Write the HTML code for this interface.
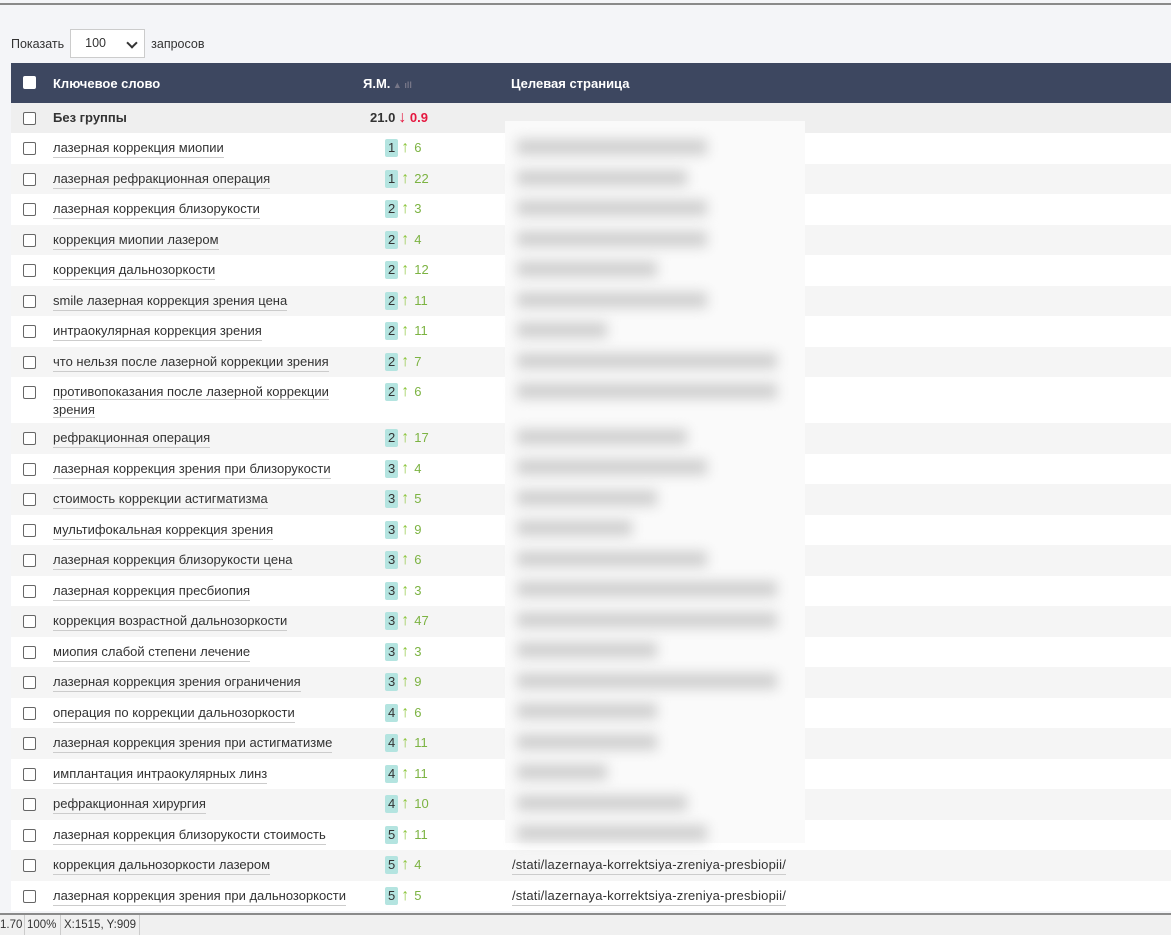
<!DOCTYPE html>
<html><head><meta charset="utf-8"><style>
*{box-sizing:border-box;margin:0;padding:0}
body{width:1171px;height:935px;overflow:hidden;background:#f4f5f8;font-family:"Liberation Sans","DejaVu Sans",sans-serif;font-size:13px;color:#333;position:relative}
.top{position:absolute;left:0;top:3px;width:1171px;height:2px;background:#8a8a8a}
.show{position:absolute;left:11px;top:29px;height:29px;display:flex;align-items:center;gap:4px;color:#333;font-size:12.5px}
.sel{width:75px;height:29px;border:1px solid #ccc;background:#fff;position:relative;padding-left:14px;line-height:27px;margin:0 2px}
.sel:after{content:"";position:absolute;right:8px;top:9px;width:6px;height:6px;border-right:2px solid #333;border-bottom:2px solid #333;transform:rotate(45deg)}
.tbl{position:absolute;left:11px;top:63px;width:1160px}
.hd{height:40px;background:#3d4760;color:#fff;font-weight:bold;position:relative}
.hd span{position:absolute;top:13px}
.cb{position:absolute;left:12px;width:13px;height:13px;border:1px solid #666;border-radius:2px;background:#fff}
.row{position:relative;height:30.5px;background:#fff}
.row.g{background:#f5f5f5}
.row .cb{top:9px}
.kw{position:absolute;left:42px;top:6px;line-height:18px;border-bottom:1px solid #ccc;max-width:300px}
.pos{position:absolute;left:374px;top:6px;display:flex;align-items:center;gap:3px;line-height:18px}
.b{background:#b4e4e0;border-radius:2px;padding:0 3px;color:#333}
.ar{color:#8dc63f;font-weight:bold;font-size:16px}
.n{color:#7cb342;margin-left:2px}
.url{position:absolute;left:501px;top:6px;border-bottom:1px solid #ccc;line-height:18px;letter-spacing:.2px}
.blur{position:absolute;left:505px;top:121px;width:300px;height:722px;background:#fafafa}
.bar{position:absolute;left:12px;height:16px;background:#d0d0d0;filter:blur(6px)}
.status{position:absolute;left:0;top:913px;width:1171px;height:22px;background:#f0f0f0;border-top:2px solid #8a8a8a;font-size:11.5px;color:#333;white-space:nowrap;overflow:hidden}
.status span{position:absolute;top:0;height:20px;line-height:20px;border-right:1px solid #ccc;padding-right:4px;white-space:nowrap}
</style></head><body>
<div class="top"></div>
<div class="show">Показать <div class="sel">100</div> запросов</div>
<div class="tbl">
<div class="hd"><div class="cb" style="top:13px;border-color:#fff"></div><span style="left:42px">Ключевое слово</span><span style="left:352px">Я.М.<span style="position:static;color:#778;font-size:9px"> ▲ ıll</span></span><span style="left:500px">Целевая страница</span></div>
<div class="row" style="height:30px;background:#efefef"><div class="cb"></div><div class="kw" style="border:0;font-weight:bold">Без группы</div><div class="pos" style="left:359px;font-weight:bold"><span>21.0</span><span style="color:#e5173f"><span style="font-size:16px">↓</span> 0.9</span></div></div>
<div class="row"><div class="cb"></div><div class="kw">лазерная коррекция миопии</div><div class="pos"><span class="b">1</span><span class="ar">↑</span><span class="n">6</span></div></div>
<div class="row g"><div class="cb"></div><div class="kw">лазерная рефракционная операция</div><div class="pos"><span class="b">1</span><span class="ar">↑</span><span class="n">22</span></div></div>
<div class="row"><div class="cb"></div><div class="kw">лазерная коррекция близорукости</div><div class="pos"><span class="b">2</span><span class="ar">↑</span><span class="n">3</span></div></div>
<div class="row g"><div class="cb"></div><div class="kw">коррекция миопии лазером</div><div class="pos"><span class="b">2</span><span class="ar">↑</span><span class="n">4</span></div></div>
<div class="row"><div class="cb"></div><div class="kw">коррекция дальнозоркости</div><div class="pos"><span class="b">2</span><span class="ar">↑</span><span class="n">12</span></div></div>
<div class="row g"><div class="cb"></div><div class="kw">smile лазерная коррекция зрения цена</div><div class="pos"><span class="b">2</span><span class="ar">↑</span><span class="n">11</span></div></div>
<div class="row"><div class="cb"></div><div class="kw">интраокулярная коррекция зрения</div><div class="pos"><span class="b">2</span><span class="ar">↑</span><span class="n">11</span></div></div>
<div class="row g"><div class="cb"></div><div class="kw">что нельзя после лазерной коррекции зрения</div><div class="pos"><span class="b">2</span><span class="ar">↑</span><span class="n">7</span></div></div>
<div class="row" style="height:46px"><div class="cb"></div><div class="kw" style="border:0"><span style="border-bottom:1px solid #ccc">противопоказания после лазерной коррекции</span><br><span style="border-bottom:1px solid #ccc">зрения</span></div><div class="pos"><span class="b">2</span><span class="ar">↑</span><span class="n">6</span></div></div>
<div class="row g"><div class="cb"></div><div class="kw">рефракционная операция</div><div class="pos"><span class="b">2</span><span class="ar">↑</span><span class="n">17</span></div></div>
<div class="row"><div class="cb"></div><div class="kw">лазерная коррекция зрения при близорукости</div><div class="pos"><span class="b">3</span><span class="ar">↑</span><span class="n">4</span></div></div>
<div class="row g"><div class="cb"></div><div class="kw">стоимость коррекции астигматизма</div><div class="pos"><span class="b">3</span><span class="ar">↑</span><span class="n">5</span></div></div>
<div class="row"><div class="cb"></div><div class="kw">мультифокальная коррекция зрения</div><div class="pos"><span class="b">3</span><span class="ar">↑</span><span class="n">9</span></div></div>
<div class="row g"><div class="cb"></div><div class="kw">лазерная коррекция близорукости цена</div><div class="pos"><span class="b">3</span><span class="ar">↑</span><span class="n">6</span></div></div>
<div class="row"><div class="cb"></div><div class="kw">лазерная коррекция пресбиопия</div><div class="pos"><span class="b">3</span><span class="ar">↑</span><span class="n">3</span></div></div>
<div class="row g"><div class="cb"></div><div class="kw">коррекция возрастной дальнозоркости</div><div class="pos"><span class="b">3</span><span class="ar">↑</span><span class="n">47</span></div></div>
<div class="row"><div class="cb"></div><div class="kw">миопия слабой степени лечение</div><div class="pos"><span class="b">3</span><span class="ar">↑</span><span class="n">3</span></div></div>
<div class="row g"><div class="cb"></div><div class="kw">лазерная коррекция зрения ограничения</div><div class="pos"><span class="b">3</span><span class="ar">↑</span><span class="n">9</span></div></div>
<div class="row"><div class="cb"></div><div class="kw">операция по коррекции дальнозоркости</div><div class="pos"><span class="b">4</span><span class="ar">↑</span><span class="n">6</span></div></div>
<div class="row g"><div class="cb"></div><div class="kw">лазерная коррекция зрения при астигматизме</div><div class="pos"><span class="b">4</span><span class="ar">↑</span><span class="n">11</span></div></div>
<div class="row"><div class="cb"></div><div class="kw">имплантация интраокулярных линз</div><div class="pos"><span class="b">4</span><span class="ar">↑</span><span class="n">11</span></div></div>
<div class="row g"><div class="cb"></div><div class="kw">рефракционная хирургия</div><div class="pos"><span class="b">4</span><span class="ar">↑</span><span class="n">10</span></div></div>
<div class="row"><div class="cb"></div><div class="kw">лазерная коррекция близорукости стоимость</div><div class="pos"><span class="b">5</span><span class="ar">↑</span><span class="n">11</span></div></div>
<div class="row g"><div class="cb"></div><div class="kw">коррекция дальнозоркости лазером</div><div class="pos"><span class="b">5</span><span class="ar">↑</span><span class="n">4</span></div><div class="url">/stati/lazernaya-korrektsiya-zreniya-presbiopii/</div></div>
<div class="row"><div class="cb"></div><div class="kw">лазерная коррекция зрения при дальнозоркости</div><div class="pos"><span class="b">5</span><span class="ar">↑</span><span class="n">5</span></div><div class="url">/stati/lazernaya-korrektsiya-zreniya-presbiopii/</div></div>
</div>
<div class="blur">
<div class="bar" style="top:18px;width:190px"></div>
<div class="bar" style="top:49px;width:170px"></div>
<div class="bar" style="top:79px;width:190px"></div>
<div class="bar" style="top:110px;width:190px"></div>
<div class="bar" style="top:140px;width:140px"></div>
<div class="bar" style="top:171px;width:190px"></div>
<div class="bar" style="top:201px;width:90px"></div>
<div class="bar" style="top:232px;width:260px"></div>
<div class="bar" style="top:262px;width:260px"></div>
<div class="bar" style="top:308px;width:170px"></div>
<div class="bar" style="top:338px;width:190px"></div>
<div class="bar" style="top:369px;width:140px"></div>
<div class="bar" style="top:399px;width:115px"></div>
<div class="bar" style="top:430px;width:190px"></div>
<div class="bar" style="top:460px;width:260px"></div>
<div class="bar" style="top:491px;width:260px"></div>
<div class="bar" style="top:521px;width:140px"></div>
<div class="bar" style="top:552px;width:260px"></div>
<div class="bar" style="top:582px;width:140px"></div>
<div class="bar" style="top:613px;width:140px"></div>
<div class="bar" style="top:643px;width:90px"></div>
<div class="bar" style="top:674px;width:170px"></div>
<div class="bar" style="top:704px;width:190px"></div>
</div>
<div class="status"><span style="left:0;width:25px">1.70</span><span style="left:27px;width:34px">100%</span><span style="left:64px;width:76px">X:1515, Y:909</span></div>
</body></html>
